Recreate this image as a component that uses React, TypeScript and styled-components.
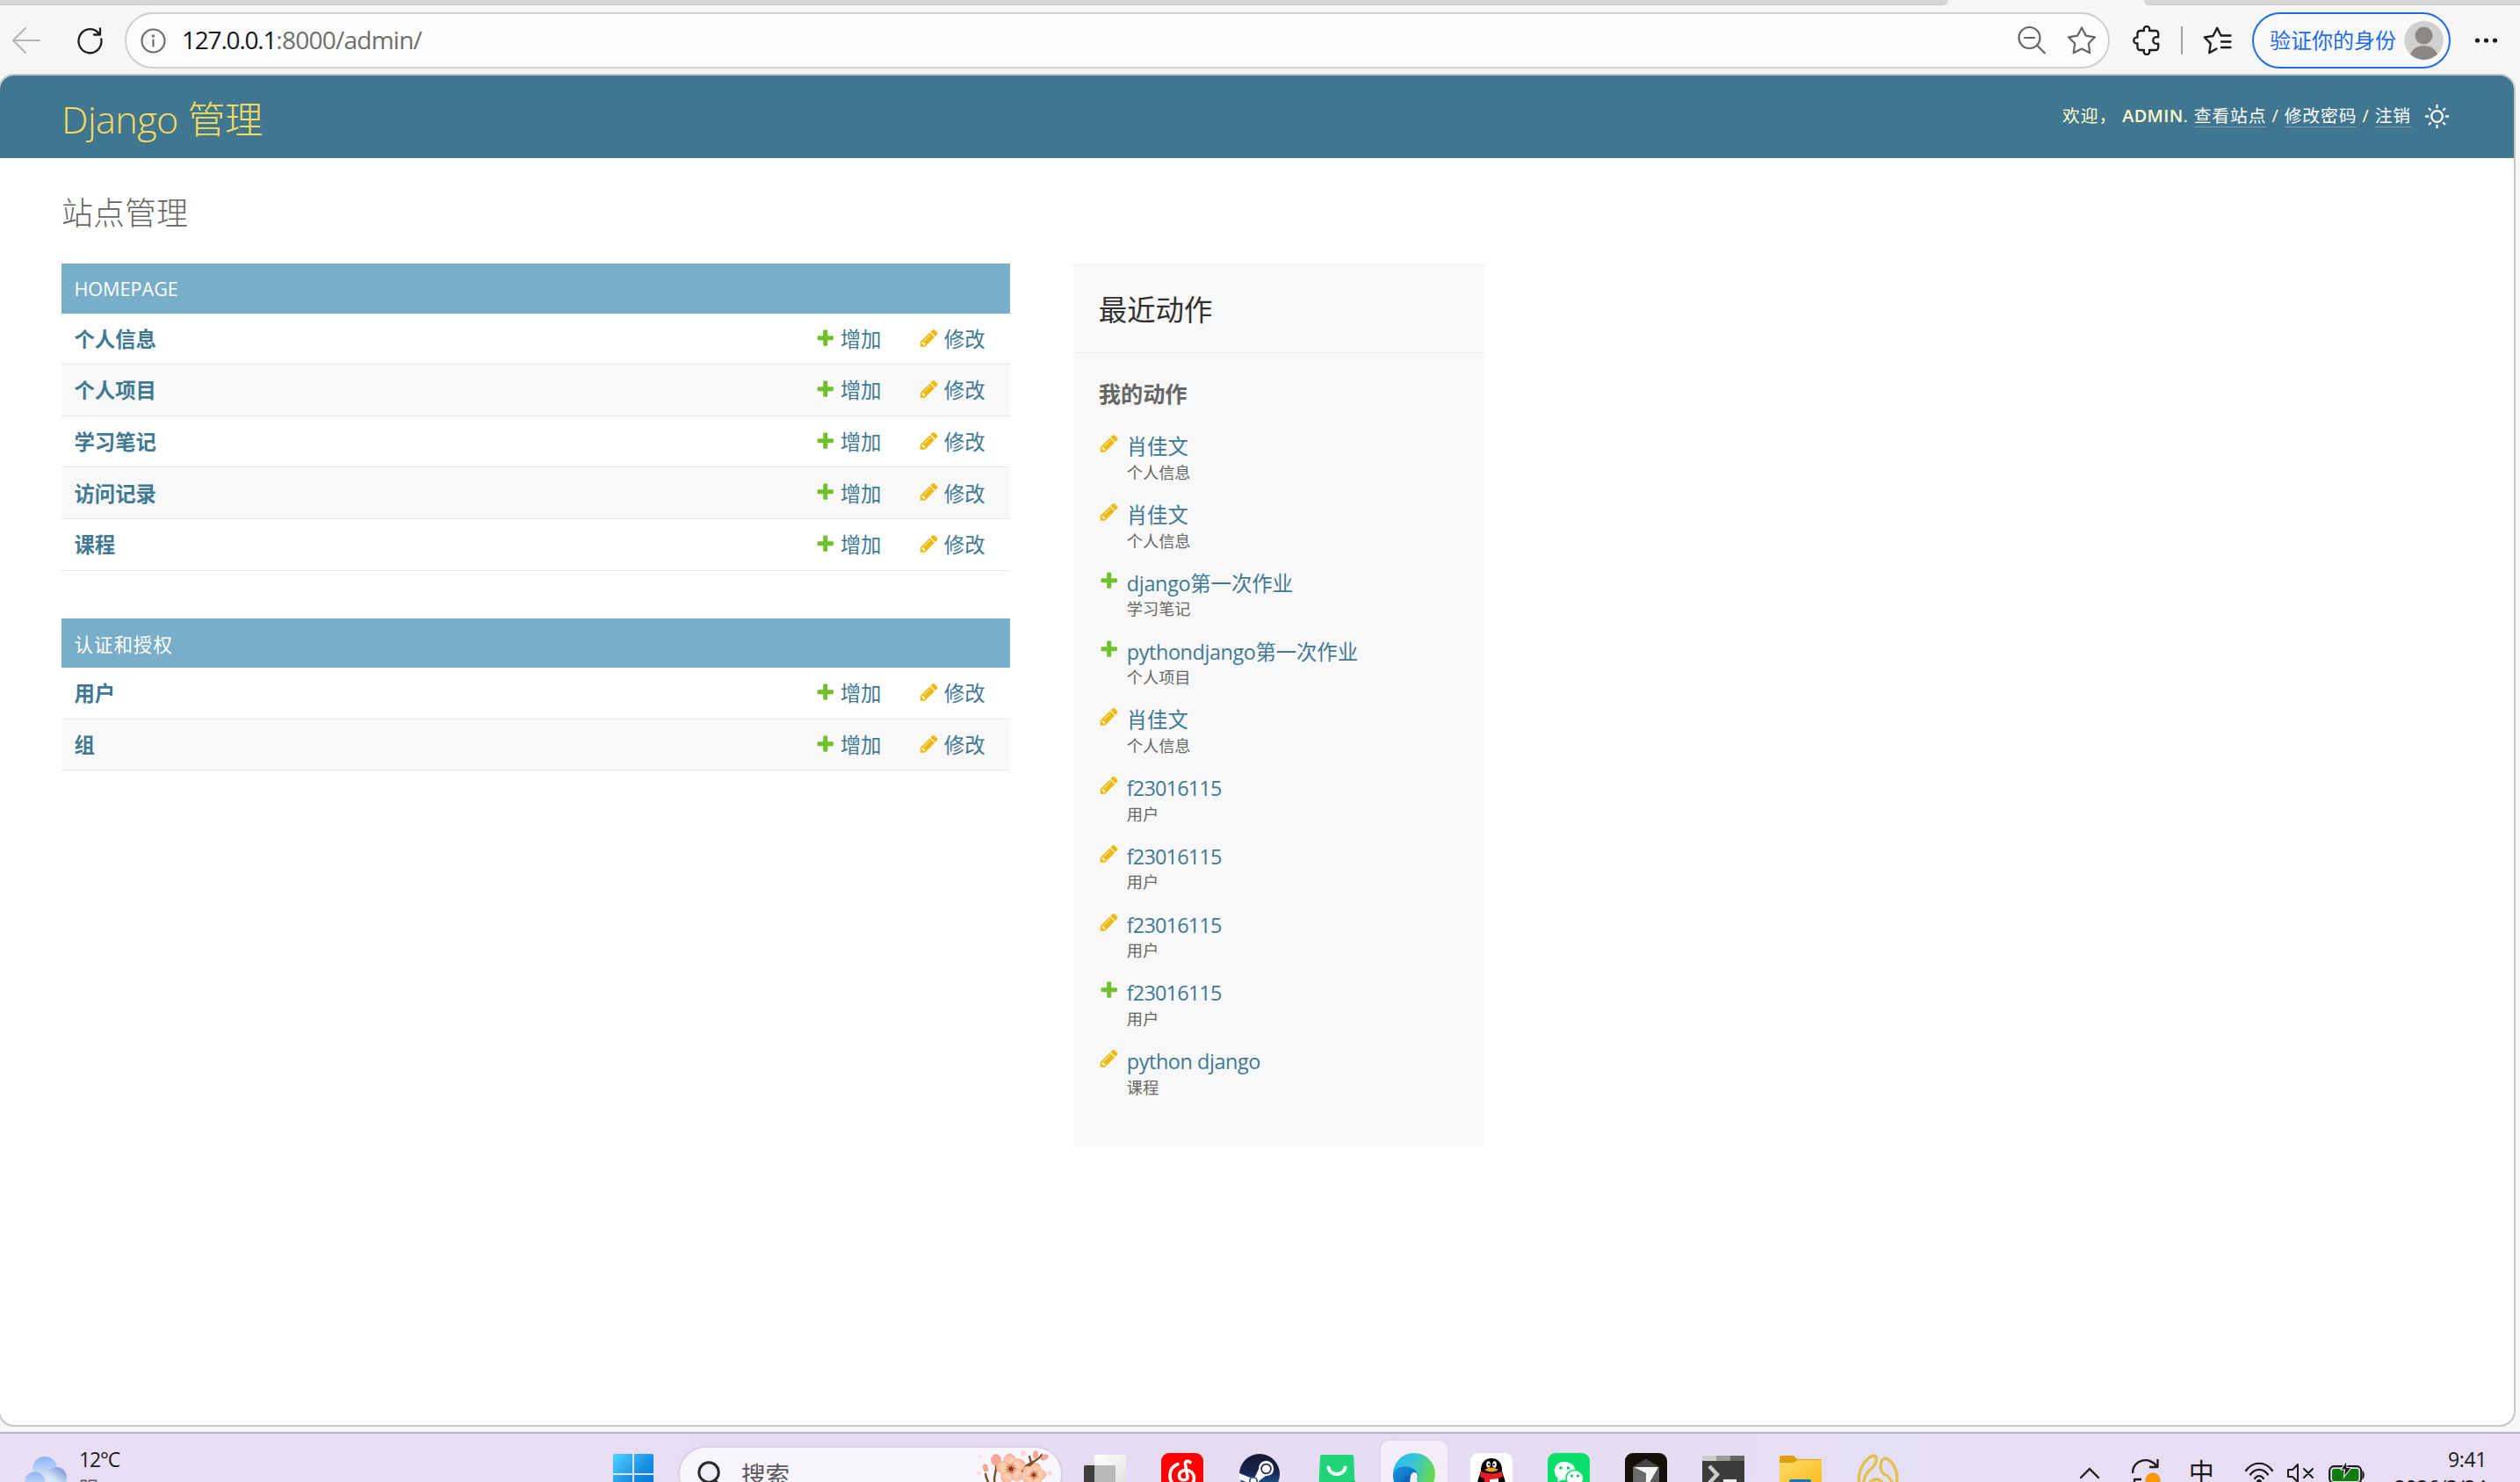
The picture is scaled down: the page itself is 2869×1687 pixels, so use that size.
import React from "react";
import styled, { createGlobalStyle } from "styled-components";

const GlobalStyle = createGlobalStyle`
  * { box-sizing: border-box; }
  html, body { margin: 0; padding: 0; }
  body {
    width: 2869px;
    height: 1687px;
    overflow: hidden;
    background: #f6f6f6;
    font-family: "Open Sans", "Noto Sans CJK SC", sans-serif;
  }
  svg { display: block; flex: none; }
  h1, h2, h3, ul { margin: 0; padding: 0; font-weight: inherit; list-style: none; }
`;

const Screen = styled.div`
  width: 2869px;
  height: 1687px;
  display: flex;
  flex-direction: column;
  overflow: hidden;
`;

/* ---------- browser chrome ---------- */

const TabStrip = styled.div`
  height: 6px;
  flex: none;
  display: flex;
  background: #f6f6f6;
`;

const TabStripSide = styled.div<{ $width?: number; $side: "left" | "right" }>`
  ${(p) => (p.$width ? `width: ${p.$width}px;` : "flex: 1;")}
  background: #d6d6d6;
  border-bottom: 1px solid #c6c6c6;
  border-radius: ${(p) => (p.$side === "left" ? "0 0 14px 0" : "0 0 0 14px")};
`;

const ActiveTab = styled.div`
  width: 223px;
`;

const Toolbar = styled.div`
  height: 78px;
  flex: none;
  display: flex;
  align-items: center;
  padding: 2px 23px 0 14px;
`;

const NavButtons = styled.div`
  width: 128px;
  display: flex;
  gap: 42px;
`;

const AddressBar = styled.div`
  width: 2260px;
  height: 64px;
  display: flex;
  align-items: center;
  padding: 0 13px 0 16px;
  border: 2px solid #cfcfcf;
  border-radius: 32px;
  background: #fcfcfc;
`;

const Url = styled.div`
  flex: 1;
  margin: -2px 0 0 18px;
  font-size: 28px;
  line-height: 40px;
  letter-spacing: -0.75px;
  color: #6e6e6e;
`;

const UrlHost = styled.span`
  color: #16161c;
  letter-spacing: -1.2px;
`;

const AddressActions = styled.div`
  display: flex;
  gap: 24px;
`;

const ToolbarActions = styled.div`
  display: flex;
  align-items: center;
  margin-left: 26px;
`;

const ToolbarDivider = styled.div`
  width: 2px;
  height: 32px;
  margin: 0 23px 0 24px;
  background: #a2a2a2;
`;

const VerifyButton = styled.div`
  width: 226px;
  height: 64px;
  display: flex;
  align-items: center;
  justify-content: space-between;
  margin: 0 27px 0 23px;
  padding: 0 6px 0 18px;
  border: 2px solid #1e6bea;
  border-radius: 32px;
  background: #fafafa;
  color: #1e6bea;
  font-size: 24px;
  line-height: 32px;
`;

/* ---------- page ---------- */

const Page = styled.div`
  width: 2866px;
  height: 1540px;
  flex: none;
  margin-left: -2px;
  border: 2px solid #c6c6c6;
  border-radius: 18px;
  background: #fff;
  overflow: hidden;
`;

const Header = styled.header`
  height: 94px;
  display: flex;
  align-items: center;
  justify-content: space-between;
  padding: 0 73px 0 70px;
  background: #417690;
  color: #ffc;
`;

const SiteName = styled.h1`
  padding-top: 5px;
  font-size: 43.2px;
  line-height: 60px;
  font-weight: 300;
  letter-spacing: -0.6px;
  color: #f5dd5d;
`;

const UserTools = styled.div`
  display: flex;
  align-items: center;
  margin-top: -2px;
  font-size: 19.8px;
  line-height: 24px;
  letter-spacing: 0.9px;
  white-space: pre;
`;

const UserName = styled.strong`
  font-weight: 600;
  letter-spacing: 0.4px;
`;

const ToolLink = styled.a`
  color: #fff;
  border-bottom: 1px solid rgba(255, 255, 255, 0.3);
`;

const ThemeToggle = styled.div`
  margin-left: 15px;
`;

const PageTitle = styled.h1`
  margin: 37px 0 32px 70px;
  font-size: 36px;
  line-height: 51px;
  font-weight: 300;
  color: #666;
`;

const Columns = styled.div`
  display: flex;
  align-items: flex-start;
  gap: 72px;
  padding-left: 70px;
`;

const Main = styled.div`
  width: 1080px;
  display: flex;
  flex-direction: column;
  gap: 54px;
`;

const Caption = styled.h2<{ $spacing: number }>`
  height: 56.6px;
  padding: 1px 14.4px 0;
  display: flex;
  align-items: center;
  background: #79aec8;
  color: #fff;
  font-size: 21.6px;
  letter-spacing: ${(p) => p.$spacing}px;
`;

const ModelRow = styled.div<{ $shaded: boolean }>`
  height: 58.6px;
  display: flex;
  align-items: center;
  padding: 1px 28.4px 0 14.4px;
  border-bottom: 1px solid #e8e8e8;
  background: ${(p) => (p.$shaded ? "#f8f8f8" : "#fff")};
  font-size: 23.4px;
  line-height: 32px;
  color: #417893;
`;

const ModelName = styled.a`
  flex: 1;
  font-weight: 700;
`;

const RowAction = styled.a`
  display: flex;
  align-items: center;
  gap: 5.4px;
  margin-left: 42.6px;

  svg { margin-top: -3px; }
`;

const Sidebar = styled.aside`
  width: 468px;
  height: 1006px;
  background: #f8f8f8;
`;

const SidebarTitle = styled.h2`
  height: 102px;
  padding: 0 28.8px;
  display: flex;
  align-items: center;
  border-bottom: 1px solid #e8e8e8;
  color: #303030;
  font-size: 32.4px;
`;

const SidebarSubtitle = styled.h3`
  margin: 31px 28.8px 29.4px;
  font-size: 25.2px;
  line-height: 30px;
  font-weight: 700;
  color: #666;
`;

const ActionItem = styled.li`
  height: 77.75px;
  display: flex;
  padding-left: 28.8px;
`;

const ActionIcon = styled.div`
  width: 32px;
  padding-top: 1px;
`;

const ActionName = styled.a`
  display: block;
  font-size: 23.4px;
  line-height: 32px;
  letter-spacing: -0.1px;
  color: #417893;
`;

const Latin = styled.span<{ $spacing: number }>`
  letter-spacing: ${(p) => p.$spacing}px;
`;

const ActionType = styled.span`
  display: block;
  margin-top: 2.500px;
  font-size: 18.200px;
  line-height: 22px;
  color: #666;
`;

/* ---------- taskbar ---------- */

const Taskbar = styled.footer`
  height: 57px;
  flex: none;
  margin-top: 6px;
  border-top: 2px solid #b5b1bf;
  background: linear-gradient(90deg, #e9dff4, #e5dcf1 50%, #e5dff4 75%, #e9def4);
  overflow: hidden;
`;

const TaskbarRow = styled.div`
  height: 92px;
  display: flex;
  align-items: center;
`;

const Weather = styled.div`
  width: 677px;
  display: flex;
  align-items: center;
  gap: 14px;
  padding-left: 28px;
`;

const TwoLines = styled.div<{ $right?: boolean }>`
  display: flex;
  flex-direction: column;
  margin-top: -2px;
  font-size: 23px;
  line-height: 32px;
  letter-spacing: -0.400px;
  color: #1b1b1b;
  text-align: ${(p) => (p.$right ? "right" : "left")};
`;

const Temperature = styled.span`
  letter-spacing: -1.100px;
`;

const WeatherNote = styled.span`
  color: #5c5864;
  font-size: 22px;
`;

const Slot = styled.div`
  width: 88px;
  height: 92px;
  flex: none;
  display: flex;
  align-items: center;
  justify-content: center;
`;

const ActiveTile = styled.div`
  width: 76px;
  height: 76px;
  display: flex;
  align-items: center;
  justify-content: center;
  border-radius: 9px;
  background: #f2edf9;
  box-shadow: 0 0 0 2px #dfd6ec;
`;

const SearchBox = styled.div`
  width: 438px;
  height: 64px;
  flex: none;
  display: flex;
  align-items: center;
  margin: 0 4px 0 7px;
  padding: 0 4px 0 19px;
  border: 2px solid #d9d0e6;
  border-radius: 32px;
  background: #f8f5fc;
  color: #5b5760;
  font-size: 27.500px;
  line-height: 36px;
`;

const SearchLabel = styled.span`
  flex: 1;
  margin: 1px 0 0 21px;
`;

const Tray = styled.div`
  flex: 1;
  display: flex;
  align-items: center;
  justify-content: flex-end;
  padding-right: 38px;
`;

const TrayItem = styled.div<{ $gap: number }>`
  margin: -2px ${(p) => p.$gap}px 0 0;
`;

const InputMode = styled.div`
  width: 28px;
  margin: -4px 35px 0 0;
  font-size: 29px;
  line-height: 36px;
  color: #1b1b1b;
`;

/* ---------- icons ---------- */

const line = {
  fill: "none",
  strokeLinecap: "round" as const,
  strokeLinejoin: "round" as const,
};

const PencilIcon = () => (
  <svg width="23.4" height="23.4" viewBox="0 0 1792 1792" fill="#efb80b">
    <path d="M491 1536l91-91-235-235-91 91v107h128v128h107zm523-928q0-22-22-22-10 0-17 7l-542 542q-7 7-7 17 0 22 22 22 10 0 17-7l542-542q7-7 7-17zm-54-192l416 416-832 832h-416v-416zm683 96q0 53-37 90l-166 166-416-416 166-165q36-38 90-38 53 0 91 38l235 234q37 39 37 91z" />
  </svg>
);

const PlusIcon = () => (
  <svg width="23.4" height="23.4" viewBox="0 0 1792 1792" fill="#70bf2b">
    <path d="M1600 796v192q0 40-28 68t-68 28h-416v416q0 40-28 68t-68 28h-192q-40 0-68-28t-28-68v-416h-416q-40 0-68-28t-28-68v-192q0-40 28-68t68-28h416v-416q0-40 28-68t68-28h192q40 0 68 28t28 68v416h416q40 0 68 28t28 68z" />
  </svg>
);

const BackIcon = () => (
  <svg width="32" height="32" viewBox="0 0 32 32" {...line} stroke="#b4b4b4" strokeWidth="2">
    <path d="M31 16H1M15 2L1 16l14 14" />
  </svg>
);

const ReloadIcon = () => (
  <svg width="29" height="32" viewBox="0 0 29 32" {...line} stroke="#1c1c1c" strokeWidth="2.300">
    <path d="M27.300 14.500A13 13.500 0 1 1 23.500 7L26 9.500M26 2.500v7h-7" />
  </svg>
);

const InfoIcon = () => (
  <svg width="29" height="29" viewBox="0 0 29 29" {...line} stroke="#6e6e6e" strokeWidth="2.2">
    <circle cx="14.5" cy="14.5" r="13" />
    <path d="M14.5 13.5v7" />
    <circle cx="14.5" cy="9" r="0.7" fill="#6e6e6e" />
  </svg>
);

const ZoomOutIcon = () => (
  <svg width="32" height="32" viewBox="0 0 32 32" {...line} stroke="#666" strokeWidth="2.2">
    <circle cx="13.5" cy="13" r="12" />
    <path d="M22 21.5l9 9M8 13h11" />
  </svg>
);

const StarIcon = () => (
  <svg width="34" height="32" viewBox="0 0 34 32" {...line} stroke="#666" strokeWidth="2.2">
    <path d="M17 1.5l4.8 9.2 10.2 1.6-7.2 7.3 1.5 10.6L17 25.6l-9.3 4.6 1.5-10.6L2 12.3l10.2-1.6z" />
  </svg>
);

const PuzzleIcon = () => (
  <svg width="31" height="34" viewBox="0 0 31 34" {...line} stroke="#1c1c1c" strokeWidth="2.300">
    <path d="M8.500 6H13c-.8-3 .6-5 3-5s3.800 2 3 5h7.200a3 3 0 0 1 3 3v4.300c-4-.6-6 1-6 3.700s2 4.300 6 3.700v4.300a3 3 0 0 1-3 3H19c.8 3-.6 5-3 5s-3.800-2-3-5H8.500a3 3 0 0 1-3-3v-4.600c-2.800.4-4.200-1-4.200-3.400s1.400-3.800 4.200-3.400V9a3 3 0 0 1 3-3z" />
  </svg>
);

const FavoritesIcon = () => (
  <svg width="33" height="32" viewBox="0 0 33 32" {...line} stroke="#1c1c1c" strokeWidth="2.300">
    <path d="M20.500 10.500L16.200 1.800 11.600 11 1.800 12.400l7 7.200-1.600 10.600 8.300-4.800M20.500 10.500h11M21 17.500h10.500M21 24h10.500" />
  </svg>
);

const AvatarIcon = () => (
  <svg width="45" height="46" viewBox="0 0 45 46">
    <defs>
      <clipPath id="avatar-clip"><circle cx="22.500" cy="23" r="22" /></clipPath>
    </defs>
    <circle cx="22.500" cy="23" r="22.300" fill="#d2d0ce" />
    <g fill="#8a8784" clipPath="url(#avatar-clip)">
      <circle cx="22.500" cy="17.500" r="10" />
      <ellipse cx="22.500" cy="43" rx="16" ry="14" />
    </g>
  </svg>
);

const MoreIcon = () => (
  <svg width="27" height="8" viewBox="0 0 27 8" fill="#1c1c1c">
    <circle cx="3.500" cy="4" r="2.600" /><circle cx="13.500" cy="4" r="2.600" /><circle cx="23.500" cy="4" r="2.600" />
  </svg>
);

const SunIcon = () => (
  <svg width="29" height="29" viewBox="0 0 29 29" {...line} strokeLinecap="butt" stroke="#fff" strokeWidth="2.300">
    <circle cx="14.500" cy="14.500" r="6.300" />
    <path d="M14.500 1v4.200M14.500 23.800V28M1 14.500h4.200M23.800 14.500H28M5 5l2.700 2.700M21.300 21.300L24 24M5 24l2.700-2.700M21.300 7.700L24 5" />
  </svg>
);

const CloudIcon = () => (
  <svg width="48" height="40" viewBox="0 0 48 40">
    <defs>
      <linearGradient id="cloud-a" x1="0" y1="0" x2="0" y2="1"><stop offset="0" stopColor="#8cb2f0" /><stop offset="0.800" stopColor="#d3e2f6" /></linearGradient>
      <linearGradient id="cloud-b" x1="1" y1="0" x2="0.300" y2="1"><stop offset="0" stopColor="#6288d2" /><stop offset="0.700" stopColor="#d8e6f8" /></linearGradient>
    </defs>
    <circle cx="23" cy="14" r="14" fill="url(#cloud-a)" />
    <circle cx="36" cy="24" r="12" fill="url(#cloud-b)" />
    <circle cx="11.500" cy="29" r="11.500" fill="url(#cloud-a)" />
    <path d="M10 30h30v10H10z" fill="#d3e2f6" />
  </svg>
);

const WindowsIcon = () => (
  <svg width="46" height="46" viewBox="0 0 46 46">
    <defs>
      <linearGradient id="win" gradientUnits="userSpaceOnUse" x1="0" y1="0" x2="46" y2="46"><stop offset="0" stopColor="#4fd3ff" /><stop offset="0.600" stopColor="#128ae0" /><stop offset="1" stopColor="#0070d0" /></linearGradient>
    </defs>
    <path fill="url(#win)" d="M2 0h20v22H0V2a2 2 0 0 1 2-2zM24 0h20a2 2 0 0 1 2 2v20H24zM0 24h22v22H0zM24 24h22v22H24z" />
  </svg>
);

const SearchIcon = () => (
  <svg width="30" height="34" viewBox="0 0 30 34" {...line} stroke="#2b2930" strokeWidth="3">
    <circle cx="14" cy="15" r="11.200" fill="#f0edf6" />
    <path d="M21 24l7 8" />
  </svg>
);

const Flower = ({ x, y, r, tilt }: { x: number; y: number; r: number; tilt: number }) => (
  <g transform={`translate(${x} ${y}) rotate(${tilt}) scale(${r})`}>
    {[0, 72, 144, 216, 288].map((a) => (
      <ellipse key={a} transform={`rotate(${a})`} cx="0" cy="-0.550" rx="0.400" ry="0.440" fill="url(#petal)" stroke="#ee9c7d" strokeWidth="0.040" />
    ))}
    {[20, 56, 92, 128, 164, 200, 236, 272, 308, 344].map((a) => (
      <path key={a} transform={`rotate(${a})`} d="M0 0V-0.320" stroke="#a8582c" strokeWidth="0.050" />
    ))}
    <circle r="0.150" fill="#8a3a1e" />
  </g>
);

const BlossomIcon = () => (
  <svg width="92" height="56" viewBox="0 0 92 56">
    <defs>
      <linearGradient id="petal" x1="0" y1="0" x2="0" y2="1"><stop offset="0" stopColor="#fbb79c" /><stop offset="0.600" stopColor="#fdd3b4" /><stop offset="1" stopColor="#f3a07e" /></linearGradient>
    </defs>
    <g {...line} stroke="#7a4a20" strokeWidth="2.300">
      <path d="M22 50c-2-8-10-8-12-22M22 40c-5-7 1-13 0-22M50 26c6-12 18-10 24-20M62 15l-2-7" />
      <path d="M50 26l14-11" strokeWidth="3" />
    </g>
    <g fill="#f6a894" stroke="#e08a7b" strokeWidth="0.500">
      <ellipse cx="22" cy="12" rx="5.500" ry="6.500" />
      <ellipse cx="10" cy="21" rx="2.500" ry="4.500" transform="rotate(-15 10 21)" />
      <ellipse cx="67" cy="6" rx="2.500" ry="4.500" />
      <ellipse cx="77" cy="9" rx="4.500" ry="2.500" transform="rotate(-25 77 9)" />
    </g>
    <Flower x={39} y={22} r={17} tilt={-8} />
    <Flower x={65} y={29} r={14} tilt={15} />
    <g fill="#f9ccc9" opacity="0.800">
      <circle cx="53" cy="4" r="2.800" /><circle cx="2.500" cy="27" r="2.200" /><circle cx="83" cy="27" r="2.500" /><circle cx="4" cy="8" r="1.400" />
    </g>
  </svg>
);

const TaskViewIcon = () => (
  <svg width="48" height="44" viewBox="0 0 48 44">
    <defs>
      <linearGradient id="tv" x1="0" y1="0" x2="1" y2="1"><stop offset="0" stopColor="#fff" /><stop offset="1" stopColor="#e2e2e2" /></linearGradient>
    </defs>
    <rect x="0" y="12" width="36" height="32" rx="2" fill="#3f3e3c" />
    <rect x="12" y="0" width="36" height="31" rx="2" fill="url(#tv)" />
    <path d="M12 12h22a2 2 0 0 1 2 2v17H12z" fill="#b9b8ba" />
  </svg>
);

const NeteaseIcon = () => (
  <svg width="48" height="48" viewBox="0 0 48 48">
    <rect width="48" height="48" rx="9" fill="#fe0000" />
    <path {...line} stroke="#fff" strokeWidth="3.600" d="M33 10.500c-3-2.300-6-1.200-5.500 2.500L30 27c.6 5-9.500 5.500-9.500-1 0-9 16-9 17 2 .7 14-27.500 16-27.500-2 0-7 4-11.500 9-13.500" />
  </svg>
);

const SteamIcon = () => (
  <svg width="46" height="46" viewBox="0 0 46 46">
    <defs>
      <linearGradient id="steam" x1="0" y1="0" x2="0" y2="1"><stop offset="0" stopColor="#14192f" /><stop offset="0.450" stopColor="#1b2350" /><stop offset="1" stopColor="#1583bd" /></linearGradient>
    </defs>
    <circle cx="23" cy="23" r="23" fill="url(#steam)" />
    <path d="M0 22l12 5c3-1 5-1 6-1l4-9c0-12 17-12 17 0 0 6-4 8-9 8l-8 6c0 9-11 9-12 2L0 29z" fill="#fff" />
    <circle cx="30.500" cy="17" r="5.400" fill="#fff" stroke="#1b2350" strokeWidth="1.600" />
    <circle cx="16" cy="31" r="4.200" fill="none" stroke="#1d4377" strokeWidth="1.600" />
  </svg>
);

const BagIcon = () => (
  <svg width="42" height="44" viewBox="0 0 42 44">
    <path d="M4 0h34q2 0 2.100 2L42 44H0L2 2q0-2 2-2z" fill="#1fd479" />
    <path d="M28 32l14-2v14H28z" fill="#12b765" />
    <path {...line} stroke="#fff" strokeWidth="4" d="M11.500 14.500c2 10 17 10 19 0" />
  </svg>
);

const EdgeIcon = () => (
  <svg width="48" height="48" viewBox="0 0 48 48">
    <defs>
      <linearGradient id="edge-a" x1="0" y1="0" x2="1" y2="0.300"><stop offset="0" stopColor="#2fb6f0" /><stop offset="0.500" stopColor="#35c5d8" /><stop offset="1" stopColor="#68d94e" /></linearGradient>
      <linearGradient id="edge-b" x1="0" y1="0" x2="1" y2="1"><stop offset="0" stopColor="#1492df" /><stop offset="1" stopColor="#0c55a4" /></linearGradient>
    </defs>
    <circle cx="24" cy="24" r="24" fill="url(#edge-a)" />
    <path d="M0 25c1-12 24-13 29 0l-1 2c-8 2-8 17 3 20C14 52 0 42 0 25z" fill="url(#edge-b)" />
    <path d="M28 33c-3-3 .8-5-.2-8.500C27 21 21 21 20 26c-3 8 2 17 10 22h14l-1-12c-5 4-12 2-15-3z" fill="#f2edf9" />
    <path d="M20 26c-3 8 2 17 10 22-18 1-24-24-10-22z" fill="#0d62b5" />
  </svg>
);

const QQIcon = () => (
  <svg width="48" height="48" viewBox="0 0 48 48">
    <rect width="48" height="48" rx="9" fill="#fff" />
    <path d="M24 6c8 0 12 6 12 13 0 5 4 10 4 17l-3 1-3 8H14l-3-8-3-1c0-7 4-12 4-17 0-7 4-13 12-13z" fill="#000" />
    <ellipse cx="20.500" cy="13" rx="2.300" ry="3.800" fill="#fff" /><ellipse cx="27.500" cy="13" rx="2.300" ry="3.800" fill="#fff" />
    <circle cx="21.200" cy="13.200" r="1.100" /><circle cx="26.800" cy="13.200" r="1.100" />
    <path d="M16 19q8-5 16 0-8 5-16 0z" fill="#f9a11b" />
    <path d="M16 28h16v20H16z" fill="#fff" />
    <path d="M12 21q12 5 24 0l1 6q-6 3-15 3v6h-6v-7l-5-2z" fill="#eb1c23" />
  </svg>
);

const WeChatIcon = () => (
  <svg width="48" height="48" viewBox="0 0 48 48">
    <rect width="48" height="48" rx="9" fill="#07df69" />
    <path d="M19 10c8 0 12.500 5 12.500 11 0 7-7 11-15 9.500L11 33l1-4c-8-7-4-19 7-19z" fill="#fff" />
    <path d="M31 19.500c5 0 10 4 10 9 0 3-1 5-3.500 7l.5 4-4-2c-8 1.500-13-3-13-9 0-5 4-9 10-9z" fill="#fff" stroke="#07df69" strokeWidth="1.600" />
    <g fill="#07c25c"><circle cx="15" cy="17" r="1.800" /><circle cx="23.500" cy="17" r="1.800" /><circle cx="27.500" cy="26" r="1.600" /><circle cx="34.500" cy="26" r="1.600" /></g>
  </svg>
);

const CursorIcon = () => (
  <svg width="48" height="48" viewBox="0 0 48 48">
    <rect width="48" height="48" rx="9" fill="#14110b" />
    <path d="M24 7l15 9v17l-15 9-15-9V16z" fill="#5c5c5c" />
    <path d="M24 7l15 9H9z" fill="#464646" />
    <path d="M10 33V16l14 8v18z" fill="#6c6c6c" />
    <path d="M10 16h28L24 41V23z" fill="#f4f4f4" />
  </svg>
);

const TerminalIcon = () => (
  <svg width="48" height="42" viewBox="0 0 48 42">
    <rect width="48" height="42" rx="2" fill="#3c3c3c" />
    <path d="M0 0h16v6H0z" fill="#ccc" /><path d="M16 0h16v6H16z" fill="#999" /><path d="M32 0h16v6H32z" fill="#666" />
    <path d="M8 12l9 9.500-9 9.500" fill="none" stroke="#ccc" strokeWidth="4.500" />
    <path d="M24 27h15v4H24z" fill="#f0f0f0" />
  </svg>
);

const FolderIcon = () => (
  <svg width="48" height="42" viewBox="0 0 48 42">
    <defs>
      <linearGradient id="folder" x1="0" y1="0" x2="1" y2="1"><stop offset="0" stopColor="#ffdb6b" /><stop offset="1" stopColor="#fbb812" /></linearGradient>
    </defs>
    <path d="M0 2q0-2 2-2h13q2 0 3 2l2 2h26q2 0 2 2v16H0z" fill="#e0a000" />
    <path d="M0 8h16l4-3h28v37H0z" fill="url(#folder)" />
    <path d="M13 27h21q2 0 2 2v12H11V29q0-2 2-2z" fill="#1676bb" />
  </svg>
);

const PawIcon = () => (
  <svg width="48" height="46" viewBox="0 0 48 46" {...line} stroke="#e3bf4c" strokeWidth="3.400">
    <path d="M3 36C-1 16 14 1 20 2c5 3 1 12-6 17-5 4-6 12-8 17M45 36C49 16 36 2 30 6c-4 3-4 14 1 17 6 2 9 8 11 13" />
    <path d="M12 44c0-20 20-20 20 0" />
  </svg>
);

const ChevronIcon = () => (
  <svg width="24" height="14" viewBox="0 0 24 14" {...line} stroke="#1b1b1b" strokeWidth="2.400">
    <path d="M2 12L12 2l10 10" />
  </svg>
);

const SyncIcon = () => (
  <svg width="34" height="34" viewBox="0 0 34 34" {...line} strokeLinecap="butt" stroke="#1b1b1b" strokeWidth="2.300">
    <path d="M2 17C2 1 22-3 30 10M30.500 1v9H21M12 24H4v9" />
    <circle cx="25" cy="25" r="8.200" fill="#ff9800" stroke="#c98a3a" strokeWidth="0.600" />
  </svg>
);

const WifiIcon = () => (
  <svg width="34" height="28" viewBox="0 0 34 28" {...line} stroke="#1b1b1b" strokeWidth="2.200">
    <path d="M2 11c8-11 22-11 30 0M7 15.500c5.500-7.500 14.500-7.500 20 0M12 20c3-4 7-4 10 0" />
    <circle cx="17" cy="24" r="1.800" fill="#1b1b1b" />
  </svg>
);

const MutedIcon = () => (
  <svg width="32" height="24" viewBox="0 0 32 24" {...line} stroke="#1b1b1b" strokeWidth="2">
    <path d="M2 8v8h5l6 6V2L7 8zM20 7l10 10M30 7L20 17" />
  </svg>
);

const BatteryIcon = () => (
  <svg width="42" height="28" viewBox="0 0 42 28">
    <rect x="1.200" y="6.200" width="36" height="19" rx="5" fill="none" stroke="#1b1b1b" strokeWidth="2.200" />
    <rect x="4" y="9" width="30.500" height="14" rx="2.500" fill="#107c10" />
    <path d="M38.500 11c3 1 3 9 0 10z" fill="#1b1b1b" />
    <path d="M20.500 0l-6.500 10h4.500l-1 8.500 8.500-11h-5z" fill="#1b1b1b" stroke="#e8dff4" strokeWidth="1.200" />
  </svg>
);

/* ---------- data ---------- */

const modules = [
  { title: "HOMEPAGE", spacing: 0, models: ["个人信息", "个人项目", "学习笔记", "访问记录", "课程"] },
  { title: "认证和授权", spacing: 0.9, models: ["用户", "组"] },
];

type Action = { kind: "add" | "change"; latin?: string; spacing?: number; name?: string; type: string };

const actions: Action[] = [
  { kind: "change", name: "肖佳文", type: "个人信息" },
  { kind: "change", name: "肖佳文", type: "个人信息" },
  { kind: "add", latin: "django", spacing: -0.3, name: "第一次作业", type: "学习笔记" },
  { kind: "add", latin: "pythondjango", spacing: -0.4, name: "第一次作业", type: "个人项目" },
  { kind: "change", name: "肖佳文", type: "个人信息" },
  { kind: "change", latin: "f23016115", spacing: -0.8, type: "用户" },
  { kind: "change", latin: "f23016115", spacing: -0.8, type: "用户" },
  { kind: "change", latin: "f23016115", spacing: -0.8, type: "用户" },
  { kind: "add", latin: "f23016115", spacing: -0.8, type: "用户" },
  { kind: "change", latin: "python django", spacing: -0.42, type: "课程" },
];

const apps = [TaskViewIcon, NeteaseIcon, SteamIcon, BagIcon, EdgeIcon, QQIcon, WeChatIcon, CursorIcon, TerminalIcon, FolderIcon, PawIcon];

export default function App() {
  return (
    <Screen>
      <GlobalStyle />
      <TabStrip>
        <TabStripSide $width={2218} $side="left" />
        <ActiveTab />
        <TabStripSide $side="right" />
      </TabStrip>
      <Toolbar>
        <NavButtons>
          <BackIcon />
          <ReloadIcon />
        </NavButtons>
        <AddressBar>
          <InfoIcon />
          <Url><UrlHost>127.0.0.1</UrlHost>:8000/admin/</Url>
          <AddressActions>
            <ZoomOutIcon />
            <StarIcon />
          </AddressActions>
        </AddressBar>
        <ToolbarActions>
          <PuzzleIcon />
          <ToolbarDivider />
          <FavoritesIcon />
          <VerifyButton>
            验证你的身份
            <AvatarIcon />
          </VerifyButton>
          <MoreIcon />
        </ToolbarActions>
      </Toolbar>

      <Page>
        <Header>
          <SiteName>Django 管理</SiteName>
          <UserTools>
            <span>欢迎， </span>
            <UserName>ADMIN</UserName>
            <span>. </span>
            <ToolLink>查看站点</ToolLink>
            <span> / </span>
            <ToolLink>修改密码</ToolLink>
            <span> / </span>
            <ToolLink>注销</ToolLink>
            <ThemeToggle><SunIcon /></ThemeToggle>
          </UserTools>
        </Header>
        <PageTitle>站点管理</PageTitle>
        <Columns>
          <Main>
            {modules.map((m) => (
              <section key={m.title}>
                <Caption $spacing={m.spacing}>{m.title}</Caption>
                {m.models.map((name, i) => (
                  <ModelRow key={name} $shaded={i % 2 === 1}>
                    <ModelName>{name}</ModelName>
                    <RowAction><PlusIcon />增加</RowAction>
                    <RowAction><PencilIcon />修改</RowAction>
                  </ModelRow>
                ))}
              </section>
            ))}
          </Main>
          <Sidebar>
            <SidebarTitle>最近动作</SidebarTitle>
            <SidebarSubtitle>我的动作</SidebarSubtitle>
            <ul>
              {actions.map((a, i) => (
                <ActionItem key={i}>
                  <ActionIcon>{a.kind === "add" ? <PlusIcon /> : <PencilIcon />}</ActionIcon>
                  <div>
                    <ActionName>
                      {a.latin && <Latin $spacing={a.spacing ?? 0}>{a.latin}</Latin>}
                      {a.name}
                    </ActionName>
                    <ActionType>{a.type}</ActionType>
                  </div>
                </ActionItem>
              ))}
            </ul>
          </Sidebar>
        </Columns>
      </Page>

      <Taskbar>
        <TaskbarRow>
          <Weather>
            <CloudIcon />
            <TwoLines>
              <Temperature>12°C</Temperature>
              <WeatherNote>阴</WeatherNote>
            </TwoLines>
          </Weather>
          <Slot><WindowsIcon /></Slot>
          <SearchBox>
            <SearchIcon />
            <SearchLabel>搜索</SearchLabel>
            <BlossomIcon />
          </SearchBox>
          {apps.map((Icon, i) => (
            <Slot key={i}>
              {Icon === EdgeIcon ? <ActiveTile><Icon /></ActiveTile> : <Icon />}
            </Slot>
          ))}
          <Tray>
            <TrayItem $gap={35}><ChevronIcon /></TrayItem>
            <TrayItem $gap={32}><SyncIcon /></TrayItem>
            <InputMode>中</InputMode>
            <TrayItem $gap={14}><WifiIcon /></TrayItem>
            <TrayItem $gap={16}><MutedIcon /></TrayItem>
            <TrayItem $gap={33}><BatteryIcon /></TrayItem>
            <TwoLines $right>
              <span>9:41</span>
              <span>2026/3/24</span>
            </TwoLines>
          </Tray>
        </TaskbarRow>
      </Taskbar>
    </Screen>
  );
}
